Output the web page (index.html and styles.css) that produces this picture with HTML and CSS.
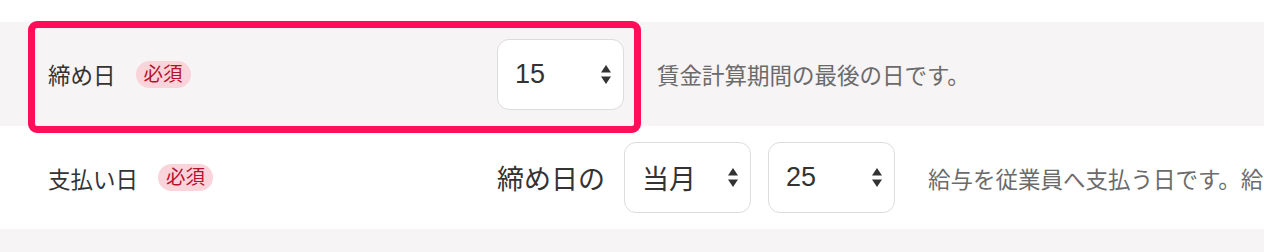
FILE: index.html
```html
<!DOCTYPE html>
<html lang="ja">
<head>
<meta charset="utf-8">
<title>締め日・支払い日</title>
<link rel="stylesheet" href="styles.css">
</head>
<body>
<div class="settings">
  <div class="row gray">
    <div class="label">
      <span class="label-text">締め日</span>
      <span class="badge">必須</span>
    </div>
    <div class="field">
      <div class="select">
        <span class="value">15</span>
        <svg class="arrows" width="10" height="19" viewBox="0 0 10 19"><polygon points="5,0 10,7.5 0,7.5"/><polygon points="0,11.5 10,11.5 5,19"/></svg>
      </div>
    </div>
    <div class="desc">賃金計算期間の最後の日です。</div>
    <div class="focus-ring"></div>
  </div>
  <div class="row">
    <div class="label">
      <span class="label-text">支払い日</span>
      <span class="badge">必須</span>
    </div>
    <div class="field">
      <span class="field-text">締め日の</span>
      <div class="select">
        <span class="value">当月</span>
        <svg class="arrows" width="10" height="19" viewBox="0 0 10 19"><polygon points="5,0 10,7.5 0,7.5"/><polygon points="0,11.5 10,11.5 5,19"/></svg>
      </div>
      <div class="select">
        <span class="value">25</span>
        <svg class="arrows" width="10" height="19" viewBox="0 0 10 19"><polygon points="5,0 10,7.5 0,7.5"/><polygon points="0,11.5 10,11.5 5,19"/></svg>
      </div>
    </div>
    <div class="desc">給与を従業員へ支払う日です。給与の支払い日を設定してください。</div>
  </div>
  <div class="row gray short"></div>
</div>
</body>
</html>
```
FILE: styles.css
```css
html, body {
  margin: 0;
  padding: 0;
  background: #ffffff;
  overflow: hidden;
}

body {
  width: 1264px;
  height: 252px;
  font-family: "Liberation Sans", "Noto Sans CJK JP", sans-serif;
  color: #333333;
}

.settings {
  padding-top: 22px;
}

.row {
  position: relative;
  display: flex;
  align-items: center;
  height: 104px;
  padding-left: 48px;
  box-sizing: border-box;
  white-space: nowrap;
}

.row + .row {
  height: 103px;
}

.row.gray {
  background: #f6f4f5;
}

.row.short {
  height: 23px;
}

.label {
  width: 449px;
  flex: none;
  display: flex;
  align-items: center;
}

.label-text {
  font-size: 22.5px;
  color: #333333;
}

.badge {
  margin-left: 20px;
  height: 27px;
  padding: 0 8px;
  border-radius: 14px;
  background: #f9d4da;
  color: #b5122f;
  font-size: 19.5px;
  line-height: 27px;
  display: inline-flex;
  align-items: center;
}

.field {
  display: flex;
  align-items: center;
  gap: 17px;
  flex: none;
}

.field-text {
  font-size: 27px;
  color: #333333;
  margin-right: 2px;
}

.select {
  width: 127px;
  height: 71px;
  box-sizing: border-box;
  border: 1.5px solid #dcdcdc;
  border-radius: 12px;
  background: #ffffff;
  display: flex;
  align-items: center;
  justify-content: space-between;
  padding: 0 12px 0 17px;
  font-size: 27px;
  color: #333333;
}

.arrows {
  fill: #333333;
  flex: none;
}

.desc {
  margin-left: 33px;
  font-size: 22.5px;
  color: #6b6b6b;
  flex: 1 1 auto;
  min-width: 0;
  overflow: hidden;
}

.focus-ring {
  position: absolute;
  left: 28px;
  top: -1px;
  width: 613px;
  height: 112px;
  box-sizing: border-box;
  border: 7px solid #ff0f5a;
  border-radius: 9px;
  pointer-events: none;
}
```
